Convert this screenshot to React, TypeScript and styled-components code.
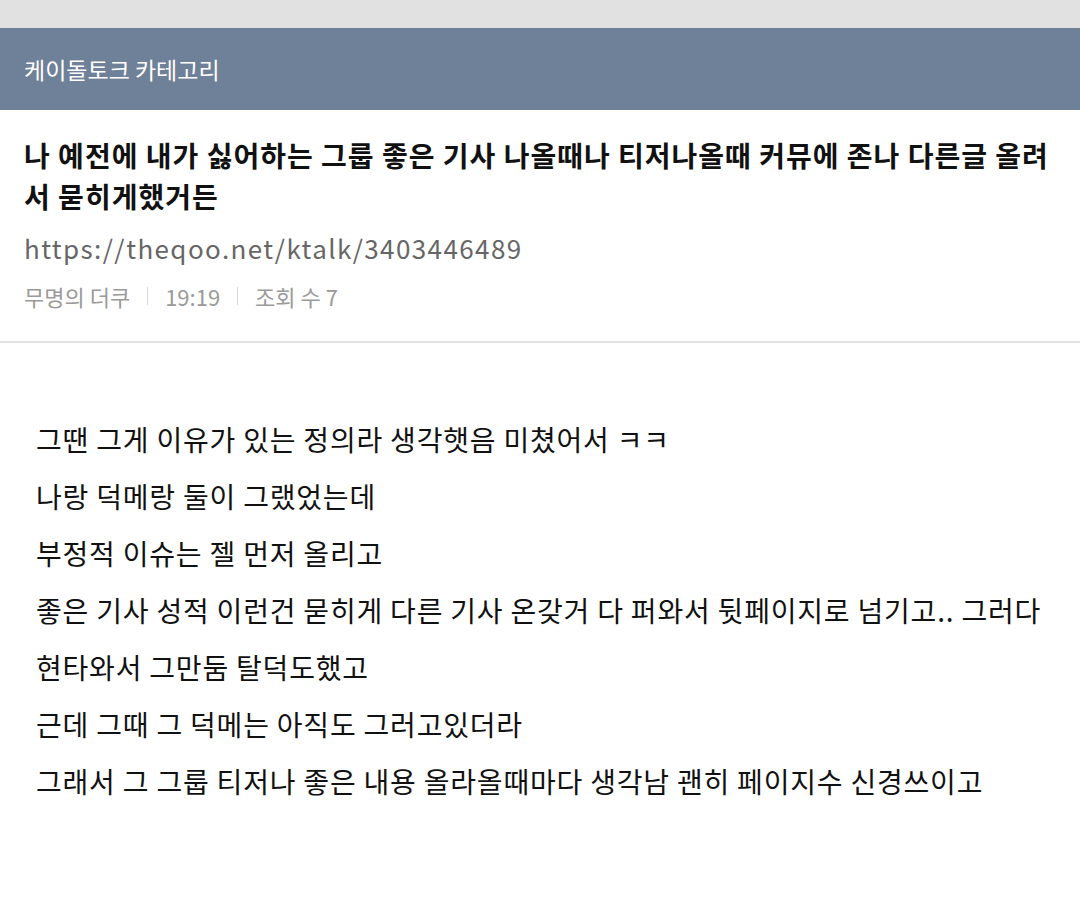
import React from 'react';
import styled, { createGlobalStyle } from 'styled-components';

const GlobalStyle = createGlobalStyle`
  html, body {
    margin: 0;
    padding: 0;
    background: #ffffff;
  }

  body {
    font-family: "Noto Sans CJK KR", "Noto Sans", sans-serif;
  }
`;

const Page = styled.div`
  width: 1080px;
  min-height: 917px;
  background: #ffffff;
`;

const StatusStrip = styled.div`
  height: 28px;
  background: #e1e1e1;
`;

const CategoryBar = styled.header`
  height: 82px;
  display: flex;
  align-items: center;
  padding: 0 24px;
  background: #6f8099;
  color: #ffffff;
  font-size: 23px;
`;

const PostHead = styled.section`
  padding: 25px 24px 29px;
  border-bottom: 2px solid #e2e2e2;
`;

const Title = styled.h1`
  margin: 0;
  font-size: 28px;
  font-weight: 700;
  line-height: 41px;
  color: #111111;
  letter-spacing: 1px;
`;

const Link = styled.div`
  margin-top: 13px;
  font-size: 26px;
  line-height: 36px;
  color: #666666;
  letter-spacing: 1.4px;
`;

const Meta = styled.div`
  margin-top: 14px;
  display: flex;
  align-items: center;
  font-size: 22px;
  line-height: 32px;
  color: #9a9a9a;
`;

const Divider = styled.span`
  width: 1px;
  height: 18px;
  margin: 0 17px;
  background: #d8d8d8;
`;

const Body = styled.article`
  padding: 68px 16px 0 36px;
`;

const Line = styled.p`
  margin: 0;
  font-size: 28px;
  line-height: 57px;
  color: #111111;
  letter-spacing: 0.8px;
`;

const lines = [
  '그땐 그게 이유가 있는 정의라 생각햇음 미쳤어서 ㅋㅋ',
  '나랑 덕메랑 둘이 그랬었는데',
  '부정적 이슈는 젤 먼저 올리고',
  '좋은 기사 성적 이런건 묻히게 다른 기사 온갖거 다 퍼와서 뒷페이지로 넘기고.. 그러다',
  '현타와서 그만둠 탈덕도했고',
  '근데 그때 그 덕메는 아직도 그러고있더라',
  '그래서 그 그룹 티저나 좋은 내용 올라올때마다 생각남 괜히 페이지수 신경쓰이고',
];

export default function App() {
  return (
    <Page>
      <GlobalStyle />
      <StatusStrip />
      <CategoryBar>케이돌토크 카테고리</CategoryBar>
      <PostHead>
        <Title>
          나 예전에 내가 싫어하는 그룹 좋은 기사 나올때나 티저나올때 커뮤에 존나 다른글 올려서 묻히게했거든
        </Title>
        <Link>https://theqoo.net/ktalk/3403446489</Link>
        <Meta>
          <span>무명의 더쿠</span>
          <Divider />
          <span>19:19</span>
          <Divider />
          <span>조회 수 7</span>
        </Meta>
      </PostHead>
      <Body>
        {lines.map((text) => (
          <Line key={text}>{text}</Line>
        ))}
      </Body>
    </Page>
  );
}
